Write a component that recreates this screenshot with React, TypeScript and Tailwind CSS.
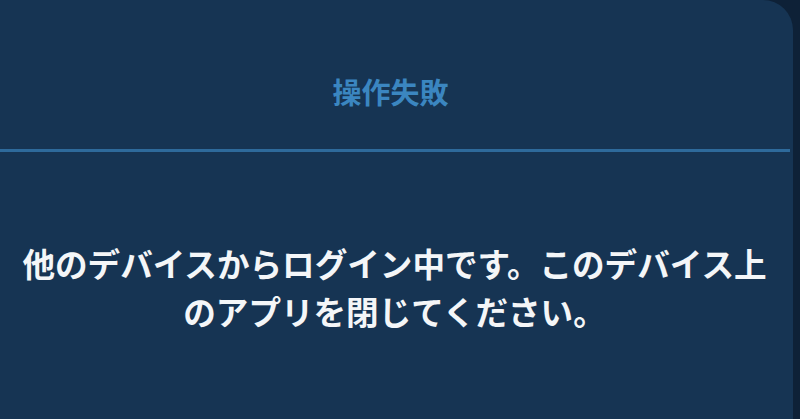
import React from 'react';

const jpFont = { fontFamily: '"Noto Sans CJK JP", "Noto Sans", sans-serif' };

export default function App() {
    return (
        <div className="w-[800px] h-[419px] bg-[#0e2137] flex overflow-hidden" style={jpFont}>
            <div className="w-[793px] h-full bg-[#163453] rounded-tr-[30px] flex flex-col">
                <div className="h-[149px] pt-[71px] pr-3 text-center">
                    <h2 className="text-[29px] leading-[40px] font-bold text-[#3b86c0]">操作失敗</h2>
                </div>
                <div className="h-[3px] w-[790px] bg-[#2e6a9b]" />
                <div className="pt-[87px] pl-3 pr-4 text-center">
                    <p className="text-[32.6px] leading-[48px] font-bold text-[#f4f6f8]">
                        他のデバイスからログイン中です。このデバイス上
                        <br />
                        のアプリを閉じてください。
                    </p>
                </div>
            </div>
        </div>
    );
}
